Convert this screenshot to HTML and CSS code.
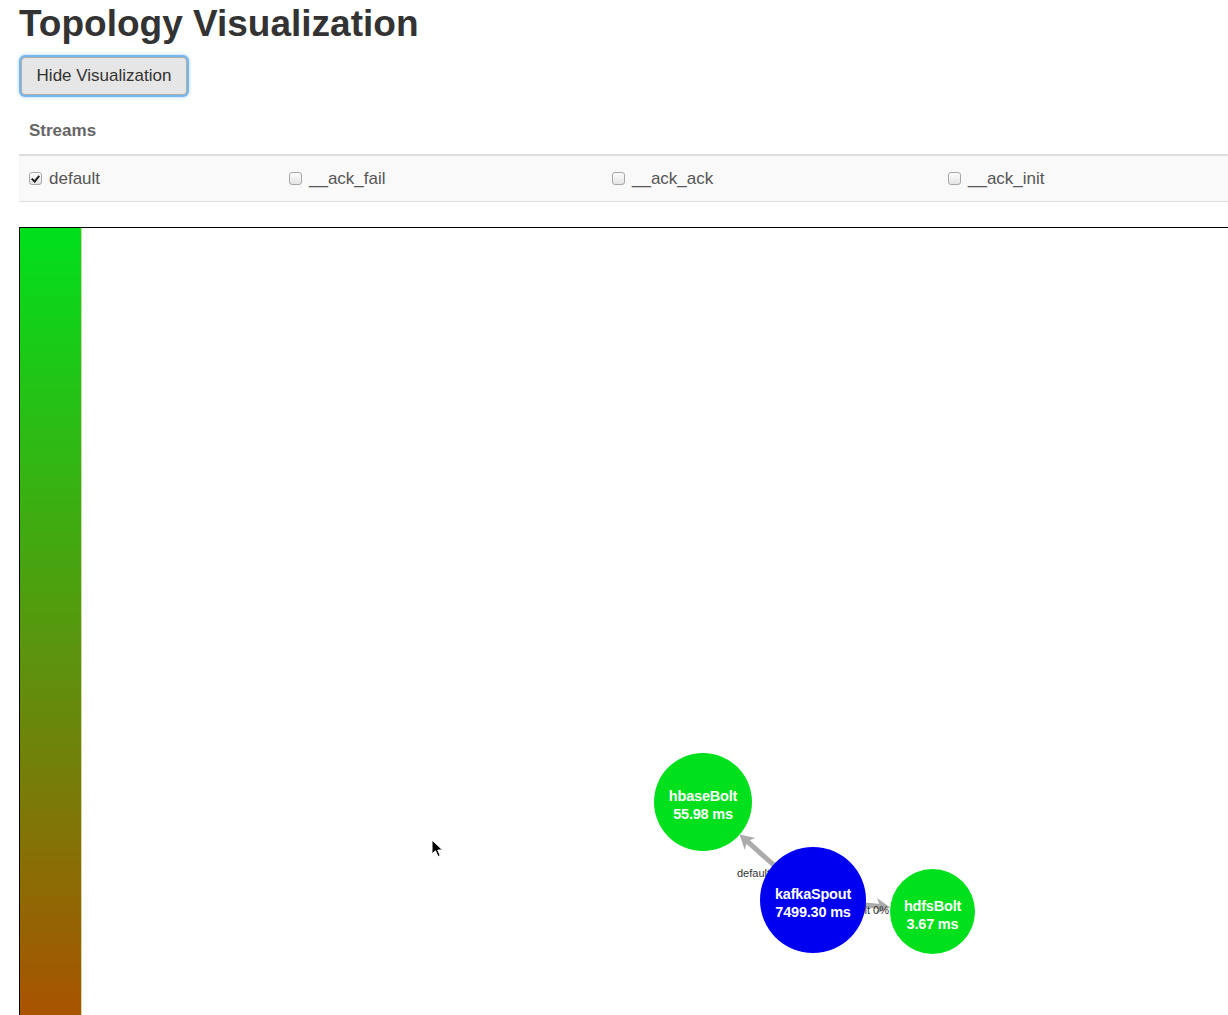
FILE: index.html
```html
<!DOCTYPE html>
<html>
<head>
<meta charset="utf-8">
<link rel="stylesheet" href="styles.css">
</head>
<body>
<div class="page">
  <h1 class="title">Topology Visualization</h1>
  <button class="btn">Hide Visualization</button>
  <div class="streams-head">Streams</div>
  <div class="streams-row">
    <label class="cell"><input type="checkbox" class="cb" checked> default</label>
    <label class="cell"><input type="checkbox" class="cb"> __ack_fail</label>
    <label class="cell"><input type="checkbox" class="cb"> __ack_ack</label>
    <label class="cell"><input type="checkbox" class="cb"> __ack_init</label>
  </div>
  <div class="canvas">
    <div class="legend-bar"></div>
    <svg class="graph" width="1200" height="800" viewBox="0 0 1200 800">
      <g class="edges">
        <line x1="731" y1="672" x2="665.1" y2="613.2" class="edge"/>
        <polygon points="0,0 -14,-8 -10,0 -14,8" class="arrow" transform="translate(657.6 606.6) rotate(221.7)"/>
        <line x1="731" y1="672" x2="798.3" y2="678.4" class="edge"/>
        <polygon points="0,0 -14,-8 -10,0 -14,8" class="arrow" transform="translate(808.2 679.4) rotate(5.5)"/>
        <text x="655" y="649" class="elabel">default 100%</text>
        <text x="807" y="686" class="elabel" text-anchor="end">default 0%</text>
      </g>
      <g class="nodes">
        <circle cx="621" cy="574" r="49" class="bolt"/>
        <text x="621" y="573" class="nlabel">hbaseBolt</text>
        <text x="621" y="591" class="nlabel">55.98 ms</text>
        <circle cx="731" cy="672" r="53" class="spout"/>
        <text x="731" y="671" class="nlabel">kafkaSpout</text>
        <text x="731" y="689" class="nlabel">7499.30 ms</text>
        <circle cx="850.5" cy="683.5" r="42.5" class="bolt"/>
        <text x="850.5" y="683" class="nlabel">hdfsBolt</text>
        <text x="850.5" y="701" class="nlabel">3.67 ms</text>
      </g>
      <path class="cursor" d="M350 612 L350 626 L353.5 622.8 L356 628.5 L358.2 627.6 L355.8 622 L360.5 622 Z"/>
    </svg>
  </div>
</div>
</body>
</html>
```
FILE: styles.css
```css
html, body {
  margin: 0;
  padding: 0;
  overflow: hidden;
  background: #fff;
}
.page {
  padding-left: 19px;
  width: 1300px;
  font-family: "Liberation Sans", Arial, Helvetica, sans-serif;
  color: #333;
}
.title {
  margin: 4px 0 0 0;
  font-size: 37px;
  line-height: 40px;
  font-weight: bold;
  color: #333;
}
.btn {
  display: block;
  margin: 13px 0 0 2px;
  height: 38px;
  width: 166px;
  padding: 0;
  font-family: "Liberation Sans", Arial, sans-serif;
  font-size: 17px;
  color: #333;
  background: #e6e6e6;
  border: 1px solid #adadad;
  border-radius: 4px;
  box-shadow: 0 0 0 2px rgba(102, 175, 233, 0.85), 0 0 3px 3px rgba(102, 175, 233, 0.35);
}
.streams-head {
  padding: 25px 0 0 10px;
  height: 34px;
  line-height: 22px;
  font-size: 17px;
  font-weight: bold;
  color: #666;
}
.streams-row {
  display: grid;
  grid-template-columns: 260px 323px 336px 1fr;
  height: 45px;
  border-top: 2px solid #ddd;
  border-bottom: 1px solid #ddd;
  background: #f9f9f9;
  align-items: center;
}
.cell {
  display: flex;
  align-items: center;
  padding-left: 10px;
  font-size: 17px;
  color: #555;
  gap: 7px;
}
.cb {
  appearance: none;
  -webkit-appearance: none;
  margin: 0;
  width: 13px;
  height: 13px;
  border: 1px solid #a8a8a8;
  border-radius: 3px;
  background: linear-gradient(#fdfdfd, #e4e4e4);
  position: relative;
  box-sizing: border-box;
}
.cb:checked::after {
  content: "";
  position: absolute;
  left: 3px;
  top: 1px;
  width: 3px;
  height: 6px;
  border-right: 2px solid #222;
  border-bottom: 2px solid #222;
  transform: rotate(40deg);
}
.canvas {
  display: flex;
  margin-top: 25px;
  height: 800px;
  border-top: 1px solid #000;
  border-left: 1px solid #000;
}
.legend-bar {
  width: 62px;
  flex: none;
  background: linear-gradient(#00e01c 0%, #a85400 98%);
  border-right: 1px solid #d0d8a0;
  box-sizing: border-box;
}
.graph {
  flex: none;
  display: block;
}
.edge {
  stroke: #ababab;
  stroke-width: 5;
}
.arrow {
  fill: #ababab;
}
.elabel {
  font-family: "Liberation Sans", Arial, sans-serif;
  font-size: 11px;
  fill: #333;
}
.bolt {
  fill: #00e01c;
}
.spout {
  fill: #0000f0;
}
.nlabel {
  font-family: "Liberation Sans", Arial, sans-serif;
  font-size: 14.5px;
  font-weight: bold;
  fill: #fff;
  text-anchor: middle;
  letter-spacing: -0.2px;
}
.cursor {
  fill: #000;
  stroke: #fff;
  stroke-width: 1;
}
```
